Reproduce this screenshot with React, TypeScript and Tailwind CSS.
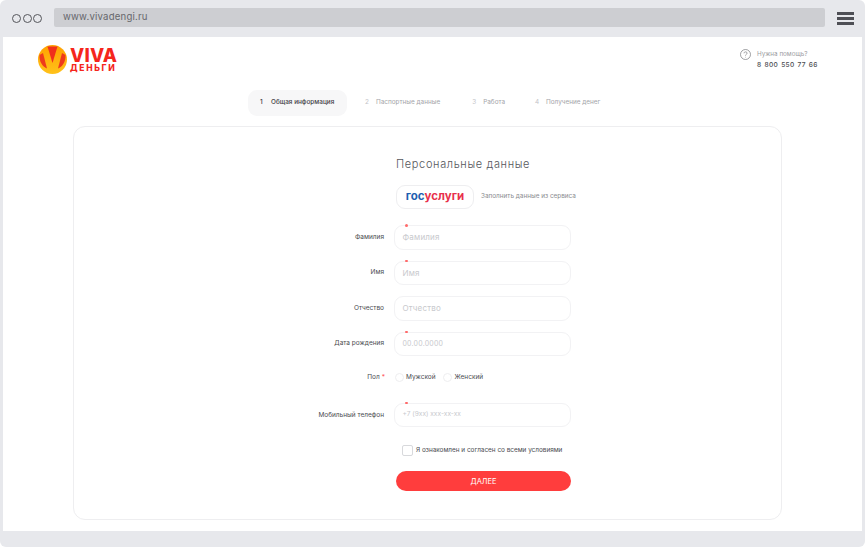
const STEPS = [
  { num: '2', label: 'Паспортные данные', className: 'ml-[18px]' },
  { num: '3', label: 'Работа', className: 'ml-[32px]' },
  { num: '4', label: 'Получение денег', className: 'ml-[30px]' },
]

const FIELDS = [
  { label: 'Фамилия', placeholder: 'Фамилия', required: true, mb: 'mb-[11px]', textClass: 'text-[8px] tracking-[0.2px]' },
  { label: 'Имя', placeholder: 'Имя', required: true, mb: 'mb-[11px]', textClass: 'text-[8px] tracking-[0.2px]' },
  { label: 'Отчество', placeholder: 'Отчество', required: false, mb: 'mb-[11px]', textClass: 'text-[8px] tracking-[0.2px]' },
  { label: 'Дата рождения', placeholder: '00.00.0000', required: true, mb: 'mb-[17px]', textClass: 'text-[7px] tracking-[0.2px]' },
]

function Logo() {
  return (
    <svg width="29" height="29" viewBox="0 0 29 29" className="shrink-0">
      <defs>
        <linearGradient id="viva" x1="0" y1="0" x2="0" y2="1">
          <stop offset="0" stopColor="#ffa000" />
          <stop offset="1" stopColor="#ffc21a" />
        </linearGradient>
      </defs>
      <circle cx="14.5" cy="14.5" r="14.5" fill="url(#viva)" />
      <path d="M9.5 1.5 L19.5 1.5 L14.5 18 Z" fill="#f0301c" />
      <path d="M1.5 10 L5 8 L9 23.5 C5 22 1 17 1.5 10 Z" fill="#ee3a1c" />
      <path d="M27.5 10 L24 8 L20 23.5 C24 22 28 17 27.5 10 Z" fill="#ee3a1c" />
    </svg>
  )
}

function Field({ label, placeholder, required, mb, textClass }: { label: string; placeholder: string; required: boolean; mb: string; textClass: string }) {
  return (
    <div className={`flex items-center ${mb}`}>
      <div className="w-[90px] pt-[1px] pr-[10px] text-right text-[6.5px] text-[#4a4b50]">{label}</div>
      <div className={`relative flex h-[24.5px] w-[177px] items-center rounded-[9px] border border-[#f2f2f4] bg-white pl-[7.5px] text-[#c8c9cd] ${textClass}`}>
        {placeholder}
        {required && <span className="absolute -top-[2px] left-[10px] h-[2.5px] w-[2.5px] rounded-full bg-[#ff6a6a]" />}
      </div>
    </div>
  )
}

export default function App() {
  return (
    <div className="h-[548px] w-[865px] overflow-hidden bg-white font-['Inter',sans-serif]">
      <div className="flex h-[547px] w-[865px] flex-col rounded-[6px] bg-[#e7e8ec]">
        <div className="flex h-[37px] shrink-0 items-start">
          <div className="flex w-[54px] shrink-0 gap-[1.5px] pt-[14px] pl-[12px]">
            <span className="h-[9px] w-[9px] rounded-full border-[1.7px] border-[#55565b]" />
            <span className="h-[9px] w-[9px] rounded-full border-[1.7px] border-[#55565b]" />
            <span className="h-[9px] w-[9px] rounded-full border-[1.7px] border-[#55565b]" />
          </div>
          <div className="mt-[8px] flex h-[19px] w-[771px] items-center rounded-[2px] bg-[#cdced2] pl-[9px] text-[9.6px] tracking-[0.2px] text-[#66676c]">
            www.vivadengi.ru
          </div>
          <div className="mt-[12px] ml-[12px] flex w-[17px] flex-col gap-[2px]">
            <span className="h-[3px] bg-[#4e4f55]" />
            <span className="h-[3px] bg-[#4e4f55]" />
            <span className="h-[3px] bg-[#4e4f55]" />
          </div>
        </div>

        <div className="mx-[3px] flex h-[494px] flex-col bg-white">
          <div className="flex h-[53px] shrink-0 items-start justify-between pt-[8px] pr-[45px] pl-[35px]">
            <div className="flex items-center gap-[3px]">
              <Logo />
              <div className="flex w-[48px] flex-col font-extrabold text-[#f5261c]">
                <span className="text-[18.5px] leading-[17px] tracking-[0.2px]">VIVA</span>
                <span className="text-[8.5px] leading-[9px] tracking-[1.7px]">ДЕНЬГИ</span>
              </div>
            </div>
            <div className="flex items-start gap-[6px] pt-[4px]">
              <svg width="11" height="11" viewBox="0 0 11 11" className="shrink-0">
                <circle cx="5.5" cy="5.5" r="5" fill="none" stroke="#77787d" strokeWidth="0.7" />
                <path d="M4 4.3 C4 2.4 7.1 2.4 7.1 4.2 C7.1 5.3 5.5 5.3 5.5 6.6" fill="none" stroke="#77787d" strokeWidth="0.7" />
                <circle cx="5.5" cy="8.1" r="0.45" fill="#77787d" />
              </svg>
              <div className="w-[60px] pt-[1px]">
                <div className="text-[6.3px] leading-[9px] text-[#9b9ca1]">Нужна помощь?</div>
                <div className="mt-[2px] text-[6.6px] leading-[9px] font-medium tracking-[0.3px] whitespace-pre text-[#4a4b50] [word-spacing:1px]">8 800 550 77 66</div>
              </div>
            </div>
          </div>

          <div className="flex h-[36px] shrink-0 items-start pl-[245px]">
            <div className="flex h-[26px] w-[99px] items-center rounded-[9px] bg-[#f7f7f8] pl-[12px] text-[6.4px] font-medium text-[#3f4045]">
              <span className="w-[11px]">1</span>
              <span>Общая информация</span>
            </div>
            <div className="flex h-[26px] items-center text-[6.4px] text-[#a3a4a9]">
              {STEPS.map((step) => (
                <div key={step.num} className={`flex items-center ${step.className}`}>
                  <span className="w-[11px] text-[#c3c4c8]">{step.num}</span>
                  <span className="whitespace-nowrap">{step.label}</span>
                </div>
              ))}
            </div>
          </div>

          <div className="mx-[70px] flex h-[394px] w-[709px] flex-col rounded-[12px] border border-[#eeeef0] pl-[322px]">
            <h1 className="mt-[29px] text-[11px] leading-[16px] font-light tracking-[0.65px] text-[#55565b]">Персональные данные</h1>
            <div className="mt-[13px] mb-[16px] flex items-center gap-[7px]">
              <div className="flex h-[24px] w-[78px] items-center justify-center rounded-[9px] border border-[#eeeef0] bg-white text-[11.5px] font-bold">
                <span className="text-[#1f5fb0]">гос</span>
                <span className="text-[#e8304c]">услуги</span>
              </div>
              <span className="text-[6.4px] text-[#8a8b90]">Заполнить данные из сервиса</span>
            </div>

            <div className="-ml-[92px]">
              {FIELDS.map((field) => (
                <Field key={field.label} {...field} />
              ))}

              <div className="mb-[20px] flex items-center">
                <div className="flex w-[90px] justify-end gap-[2px] pr-[9px] text-[6.5px] text-[#4a4b50]">
                  Пол <span className="text-[#ff5a5a]">*</span>
                </div>
                <div className="flex items-center pl-[1px] text-[6.5px] text-[#4a4b50]">
                  <span className="mr-[2px] h-[9px] w-[9px] rounded-full border border-[#eeeef0]" />
                  <span className="mr-[7px]">Мужской</span>
                  <span className="mr-[3px] h-[9px] w-[9px] rounded-full border border-[#eeeef0]" />
                  <span>Женский</span>
                </div>
              </div>

              <Field label="Мобильный телефон" placeholder="+7 (9xx) xxx-xx-xx" required mb="mb-[18px]" textClass="text-[6.6px]" />

              <div className="flex items-center pl-[98px] text-[6.4px] text-[#4a4b50]">
                <span className="mr-[3px] h-[11px] w-[11px] rounded-[2px] border border-[#d8d9dc]" />
                Я ознакомлен и согласен со всеми условиями
              </div>

              <button
                type="button"
                className="mt-[15px] ml-[92px] flex h-[20px] w-[175px] items-center justify-center rounded-full bg-[#ff3d3d] text-[7.5px] text-white"
              >
                ДАЛЕЕ
              </button>
            </div>
          </div>
        </div>
      </div>
    </div>
  )
}
